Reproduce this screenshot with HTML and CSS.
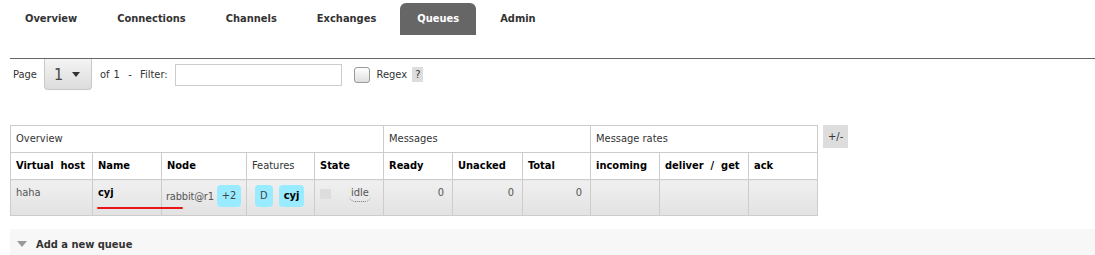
FILE: index.html
```html
<!DOCTYPE html>
<html lang="en">
<head>
    <meta charset="UTF-8">
    <title>RabbitMQ Management - Queues</title>
    <link rel="stylesheet" href="styles.css">
</head>
<body>
    <div class="container">
        <ul class="tabs">
            <li>Overview</li>
            <li>Connections</li>
            <li>Channels</li>
            <li>Exchanges</li>
            <li class="active">Queues</li>
            <li>Admin</li>
        </ul>

        <div class="main">
            <div class="paging">
                <span class="label">Page</span>
                <div class="page-select">1 <span class="arrow"></span></div>
                <span class="label of">of 1&nbsp; - &nbsp;Filter:</span>
                <input class="filter" type="text">
                <span class="check"></span>
                <span class="label regex">Regex</span>
                <span class="help">?</span>
            </div>

            <div class="list">
                <div class="table-wrap">
                    <table class="queues">
                        <colgroup>
                            <col style="width: 82px">
                            <col style="width: 69px">
                            <col style="width: 85px">
                            <col style="width: 68px">
                            <col style="width: 69px">
                            <col style="width: 69px">
                            <col style="width: 70px">
                            <col style="width: 68px">
                            <col style="width: 69px">
                            <col style="width: 89px">
                            <col style="width: 69px">
                        </colgroup>
                        <thead>
                            <tr class="group">
                                <th colspan="5">Overview</th>
                                <th colspan="3">Messages</th>
                                <th colspan="3">Message rates</th>
                            </tr>
                            <tr class="names">
                                <th>Virtual&nbsp; host</th>
                                <th>Name</th>
                                <th>Node</th>
                                <th class="plain">Features</th>
                                <th>State</th>
                                <th>Ready</th>
                                <th>Unacked</th>
                                <th>Total</th>
                                <th>incoming</th>
                                <th>deliver&nbsp; /&nbsp; get</th>
                                <th>ack</th>
                            </tr>
                        </thead>
                        <tbody>
                            <tr>
                                <td>haha</td>
                                <td class="qname">cyj</td>
                                <td class="node">rabbit@r1<span class="badge">+2</span></td>
                                <td class="features"><span class="badge">D</span><span class="badge bold">cyj</span></td>
                                <td class="state"><span class="status"></span><span class="idle">idle</span></td>
                                <td class="num">0</td>
                                <td class="num">0</td>
                                <td class="num">0</td>
                                <td></td>
                                <td></td>
                                <td></td>
                            </tr>
                        </tbody>
                    </table>
                    <div class="mark"></div>
                </div>
                <span class="toggle">+/-</span>
            </div>

            <div class="section">
                <span class="triangle"></span>
                <h2>Add a new queue</h2>
            </div>
        </div>
    </div>
</body>
</html>
```

FILE: styles.css
```css
* {
    margin: 0;
    padding: 0;
    box-sizing: border-box;
}

body {
    font-family: "DejaVu Sans Condensed", "DejaVu Sans", sans-serif;
    font-size: 11px;
    color: #333;
    background: #fff;
}

.container {
    margin-left: 10px;
}

/* top navigation */
.tabs {
    list-style: none;
    display: flex;
    gap: 8px;
    margin: 3px 0 0 -2px;
    height: 32px;
}

.tabs li {
    padding: 0 16px;
    line-height: 32px;
    font-weight: bold;
    color: #333;
}

.tabs li:first-child {
    padding-left: 17px;
}

.tabs li.active {
    padding: 0 17px;
    background: #666;
    color: #fff;
    border-radius: 6px 6px 0 0;
}

.main {
    margin-top: 23px;
    border-top: 1px solid #666;
}

/* paging row */
.paging {
    display: flex;
    align-items: center;
    height: 31px;
}

.label {
    color: #333;
}

.paging > .label:first-child {
    margin-left: 3px;
}

.page-select {
    display: flex;
    align-items: center;
    gap: 9px;
    margin-left: 7px;
    width: 48px;
    height: 31px;
    padding-left: 9px;
    font-size: 16px;
    color: #444;
    background: linear-gradient(#f4f4f4, #dcdcdc);
    border: 1px solid #c8c8c8;
    border-top: none;
    border-radius: 0 0 4px 4px;
}

.arrow {
    width: 0;
    height: 0;
    border-left: 4px solid transparent;
    border-right: 4px solid transparent;
    border-top: 5px solid #333;
}

.of {
    margin-left: 8px;
    word-spacing: 1px;
}

.filter {
    margin-left: 7px;
    width: 167px;
    height: 22px;
    border: 1px solid #ccc;
}

.check {
    margin-left: 12px;
    width: 16px;
    height: 16px;
    border: 1px solid #999;
    border-radius: 3px;
    background: linear-gradient(#fff, #dedede);
}

.regex {
    margin-left: 7px;
}

.help {
    margin-left: 5px;
    padding: 0 3px;
    height: 15px;
    line-height: 15px;
    background: #ddd;
}

/* queue list */
.list {
    display: flex;
    align-items: flex-start;
    gap: 5px;
    margin-top: 35px;
}

.table-wrap {
    position: relative;
}

.queues {
    border-collapse: collapse;
    table-layout: fixed;
    width: 807px;
}

.queues th,
.queues td {
    border: 1px solid #ccc;
    text-align: left;
    white-space: nowrap;
}

.queues th {
    padding: 6px 5px;
    line-height: 14px;
    background: #fff;
}

.queues .group th {
    font-weight: normal;
    color: #333;
}

.queues .names th {
    color: #000;
}

.queues .names th.plain {
    font-weight: normal;
    color: #333;
}

.queues td {
    padding: 6px 5px 7px;
    line-height: 14px;
    height: 36px;
    vertical-align: top;
    color: #555;
    background: linear-gradient(#f0f0f0, #e2e2e2);
}

.queues td.qname {
    font-weight: bold;
    color: #000;
}

.queues td.node {
    padding-left: 4px;
    letter-spacing: -0.2px;
}

.queues td.num {
    text-align: right;
    padding-right: 8px;
    color: #555;
}

.badge {
    display: inline-block;
    vertical-align: middle;
    padding: 4px 5px;
    line-height: 14px;
    background: #99ebff;
    border-radius: 4px;
    color: #444;
    letter-spacing: 0;
}

.node .badge {
    margin-left: 3px;
    margin-top: -1px;
}

.features .badge {
    margin-left: 3px;
    margin-top: -1px;
}

.features .badge + .badge {
    margin-left: 6px;
}

.badge.bold {
    font-weight: bold;
    color: #000;
}

.state .status {
    display: inline-block;
    width: 11px;
    height: 10px;
    margin-top: 3px;
    vertical-align: top;
    background: #ddd;
}

.state .idle {
    display: inline-block;
    margin-left: 18px;
    padding: 0 2px 1px;
    border-bottom: 1px dotted #777;
    border-radius: 0 0 6px 6px;
    color: #555;
}

.mark {
    position: absolute;
    left: 87px;
    top: 82px;
    width: 86px;
    height: 2px;
    background: #e8141a;
    border-radius: 1px;
}

.toggle {
    padding: 0 5px;
    height: 23px;
    line-height: 23px;
    background: #ddd;
    color: #333;
}

/* collapsible section */
.section {
    display: flex;
    align-items: center;
    gap: 9px;
    margin-top: 13px;
    height: 30px;
    padding-left: 7px;
    background: #f7f7f7;
}

.triangle {
    width: 0;
    height: 0;
    border-left: 5px solid transparent;
    border-right: 5px solid transparent;
    border-top: 6px solid #999;
}

.section h2 {
    font-size: 11px;
    font-weight: bold;
    color: #333;
}
```
